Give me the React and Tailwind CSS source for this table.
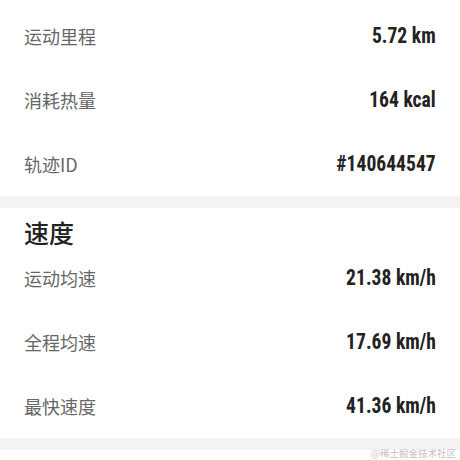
const cjk = "font-['Noto_Sans_CJK_SC','Noto_Sans',sans-serif]";
const num = "font-['Liberation_Sans_Narrow','Roboto_Condensed',sans-serif]";

function Row({ label, value }) {
  return (
    <div className="h-16 flex items-center justify-between px-6">
      <span className={`${cjk} text-[18px] leading-6 text-[#666]`}>{label}</span>
      <span className={`${num} inline-block origin-right scale-x-[0.89] text-[22px] leading-6 font-bold text-[#222]`}>{value}</span>
    </div>
  );
}

export default function App() {
  return (
    <div className="relative w-[460px] h-[460px] bg-white overflow-hidden">
      <div className="pt-1">
        <Row label="运动里程" value="5.72 km" />
        <Row label="消耗热量" value="164 kcal" />
        <Row label="轨迹ID" value="#140644547" />
      </div>
      <div className="h-3 bg-[#f3f3f3]"></div>
      <div>
        <div className={`${cjk} px-6 pt-[10px] text-[25px] leading-7 font-medium text-[#222]`}>速度</div>
        <Row label="运动均速" value="21.38 km/h" />
        <Row label="全程均速" value="17.69 km/h" />
        <Row label="最快速度" value="41.36 km/h" />
      </div>
      <div className="h-3 bg-[#f3f3f3]"></div>
      <div className={`${cjk} absolute right-1 bottom-[-1px] text-[9.5px] leading-4 text-[#c2c2c2]`}>@稀土掘金技术社区</div>
    </div>
  );
}
